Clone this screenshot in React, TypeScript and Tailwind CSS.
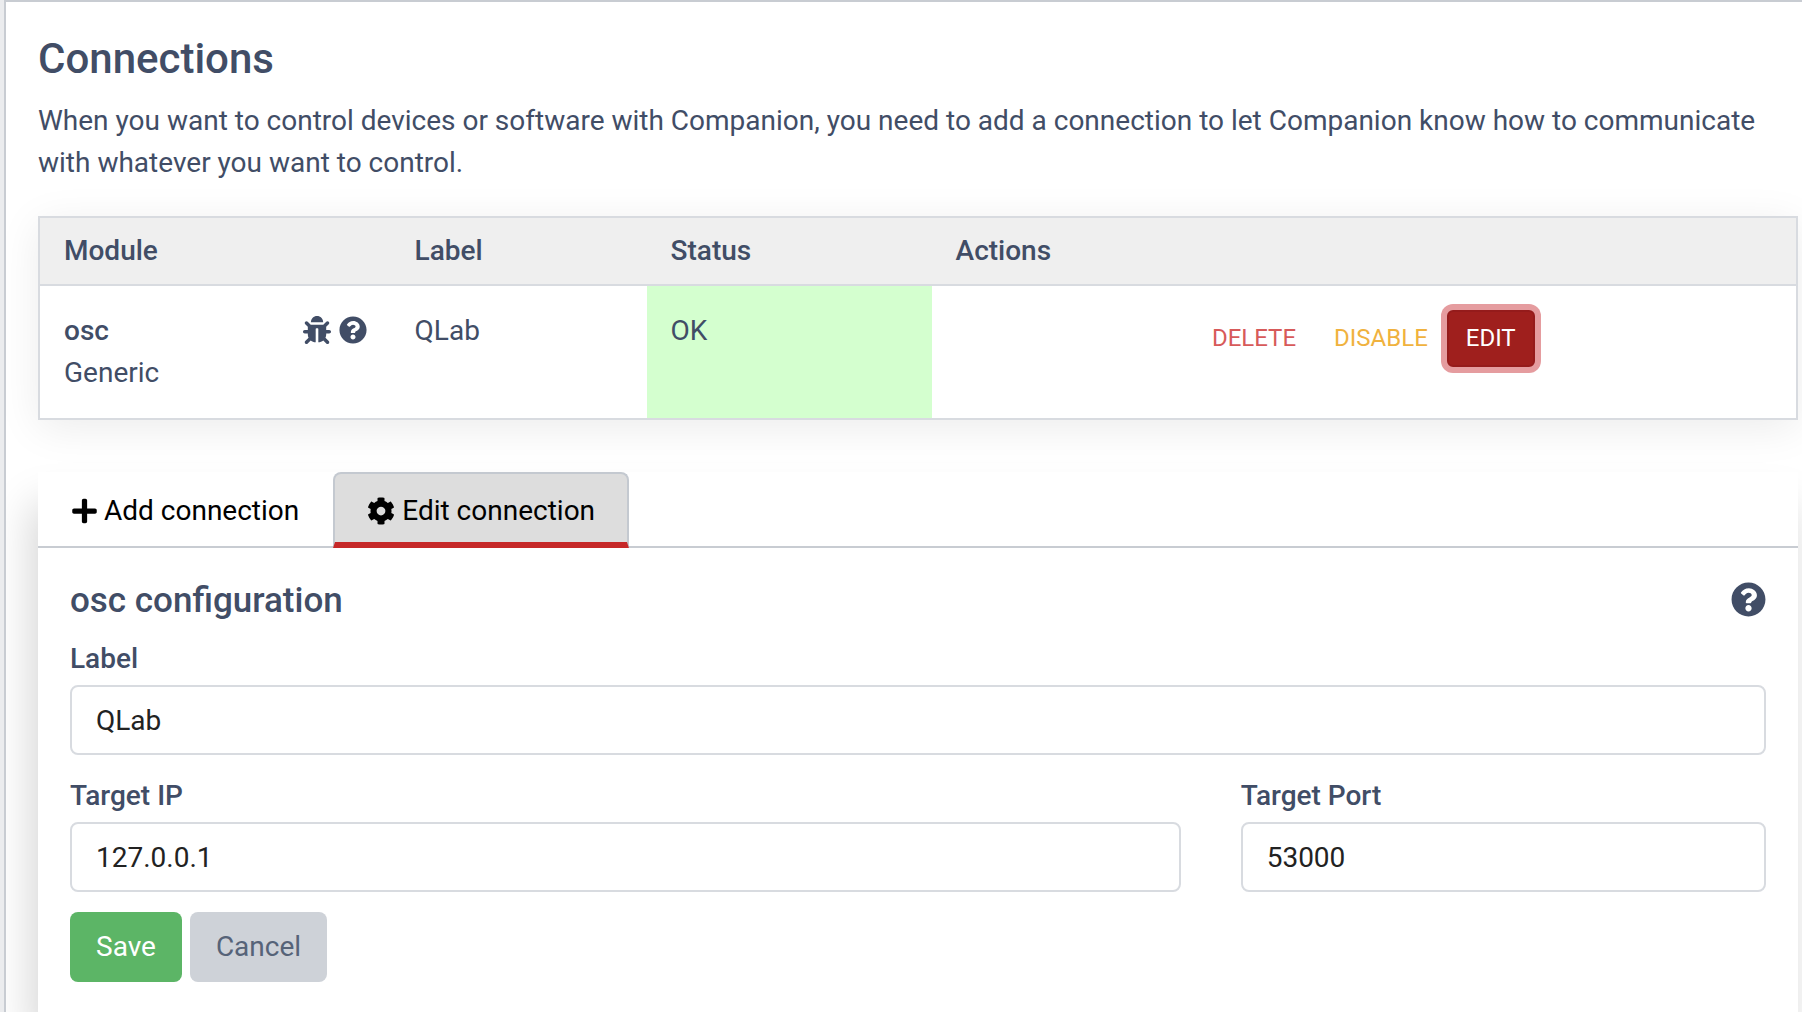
import { useState } from "react";
import type { ReactNode } from "react";
import { FaBug, FaCog, FaPlus, FaQuestionCircle } from "react-icons/fa";

const connections = [
  { id: "qlab", module: "osc", manufacturer: "Generic", label: "QLab", status: "OK" },
];

function TextField({
  id,
  label,
  value,
  onChange,
  className = "",
}: {
  id: string;
  label: string;
  value: string;
  onChange: (value: string) => void;
  className?: string;
}) {
  return (
    <div className={className}>
      <label htmlFor={id} className="block pb-[5px] font-medium">
        {label}
      </label>
      <input
        id={id}
        type="text"
        value={value}
        onChange={(e) => onChange(e.target.value)}
        className="block h-[70px] w-full rounded-lg border-2 border-[#d8dbe0] bg-white px-6 text-[#222222] outline-none"
      />
    </div>
  );
}

function Tab({
  active,
  icon,
  children,
  onClick,
}: {
  active: boolean;
  icon: ReactNode;
  children: ReactNode;
  onClick: () => void;
}) {
  return (
    <button
      type="button"
      role="tab"
      aria-selected={active}
      onClick={onClick}
      className={`-mb-0.5 flex items-center gap-[7px] rounded-t-lg border-2 border-b-[6px] px-8 pt-4 pb-2.5 text-black ${
        active
          ? "border-[#c4c9d0] border-b-[#c62828] bg-[#dddddd]"
          : "border-transparent"
      }`}
    >
      {icon}
      {children}
    </button>
  );
}

export default function App() {
  const [tab, setTab] = useState("edit");
  const [label, setLabel] = useState("QLab");
  const [host, setHost] = useState("127.0.0.1");
  const [port, setPort] = useState("53000");

  return (
    <div className="min-h-screen bg-[#ebecee] pl-1 font-[Roboto,sans-serif] text-[28px] leading-[42px] text-[#414d66]">
      <main className="flex min-h-screen flex-col overflow-hidden border-t-2 border-l-2 border-[#c8ccd2] bg-white pt-8 pr-1 pl-8">
        <h1 className="text-[42px] leading-[50px] font-medium">Connections</h1>
        <p className="mt-4 mb-8">
          When you want to control devices or software with Companion, you need to add a
          connection to let Companion know how to communicate with whatever you want to
          control.
        </p>

        {/* Connections list */}
        <table className="w-full table-fixed border-collapse border-2 border-[#d8dbe0] bg-white shadow-[0_8px_40px_rgba(0,0,0,0.08)]">
          <colgroup>
            <col className="w-[20%]" />
            <col className="w-64" />
            <col className="w-[285px]" />
            <col />
          </colgroup>
          <thead>
            <tr className="border-b-2 border-[#d8dbe0] bg-[#efefef] text-left">
              <th className="px-6 py-3 font-medium">Module</th>
              <th className="px-6 py-3 font-medium">Label</th>
              <th className="px-6 py-3 font-medium">Status</th>
              <th className="px-6 py-3 font-medium">Actions</th>
            </tr>
          </thead>
          <tbody>
            {connections.map((c) => (
              <tr key={c.id} className="align-top">
                <td className="p-6">
                  <div className="flex items-start justify-between">
                    <div>
                      <b className="font-medium">{c.module}</b>
                      <br />
                      {c.manufacturer}
                    </div>
                    <div className="flex h-10 items-center gap-2">
                      <button type="button" aria-label="Debug log">
                        <FaBug />
                      </button>
                      <button type="button" aria-label="Help">
                        <FaQuestionCircle />
                      </button>
                    </div>
                  </div>
                </td>
                <td className="p-6">{c.label}</td>
                <td className="bg-[#d4ffcf] p-6">{c.status}</td>
                <td className="p-6">
                  <div className="flex justify-center text-2xl leading-[37px]">
                    <button type="button" className="px-[19px] py-2.5 text-[#d75a5a]">
                      DELETE
                    </button>
                    <button type="button" className="px-[19px] py-2.5 text-[#f0b23e]">
                      DISABLE
                    </button>
                    <button
                      type="button"
                      className="rounded-md border-2 border-[#951b1b] bg-[#9f1f1d] px-[17px] py-2 text-white ring-6 ring-[#e59c9f]"
                    >
                      EDIT
                    </button>
                  </div>
                </td>
              </tr>
            ))}
          </tbody>
        </table>

        {/* Add / edit panel */}
        <section className="mt-[52px] grow bg-white shadow-[-6px_32px_40px_rgba(0,0,0,0.17)]">
          <div role="tablist" className="flex border-b-2 border-[#c8ccd2]">
            <Tab
              active={tab === "add"}
              icon={<FaPlus className="w-[25px]" />}
              onClick={() => setTab("add")}
            >
              Add connection
            </Tab>
            <Tab active={tab === "edit"} icon={<FaCog />} onClick={() => setTab("edit")}>
              Edit connection
            </Tab>
          </div>

          <form className="px-8 pt-8 pb-7" onSubmit={(e) => e.preventDefault()}>
            <div className="flex items-center justify-between">
              <h2 className="text-[35px] font-medium">osc configuration</h2>
              <button type="button" aria-label="osc help" className="mb-1 text-[35px]">
                <FaQuestionCircle />
              </button>
            </div>
            <div className="mt-4 grid grid-cols-12 gap-x-[60px] gap-y-5">
              <TextField
                id="label"
                label="Label"
                value={label}
                onChange={setLabel}
                className="col-span-12"
              />
              <TextField
                id="host"
                label="Target IP"
                value={host}
                onChange={setHost}
                className="col-span-8"
              />
              <TextField
                id="port"
                label="Target Port"
                value={port}
                onChange={setPort}
                className="col-span-4"
              />
            </div>
            <div className="mt-5 flex gap-2">
              <button type="submit" className="h-[70px] rounded-lg bg-[#5cb566] px-[26px] text-white">
                Save
              </button>
              <button
                type="button"
                className="h-[70px] rounded-lg bg-[#ced2d8] px-[26px] text-[#566378]"
              >
                Cancel
              </button>
            </div>
          </form>
        </section>
      </main>
    </div>
  );
}
